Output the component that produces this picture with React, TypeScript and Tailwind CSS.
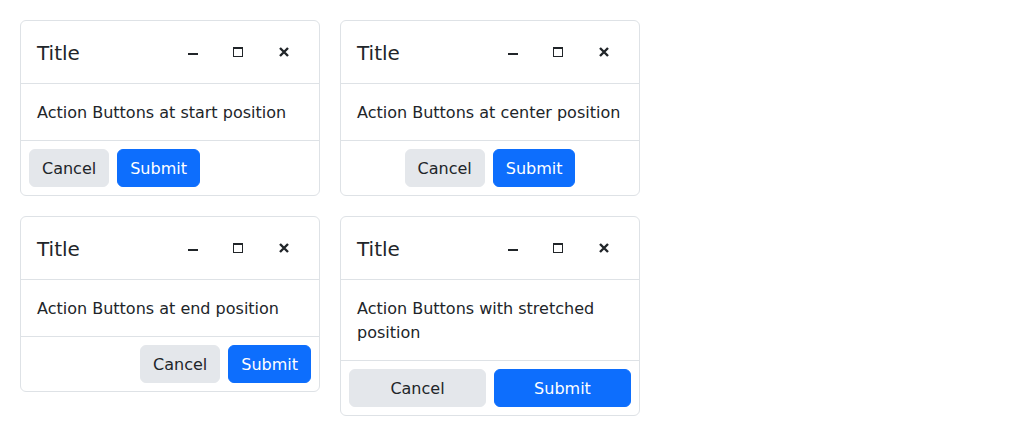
import React from "react";

type Align = "start" | "center" | "end" | "stretched";

const dialogs: { text: string; align: Align }[] = [
  { text: "Action Buttons at start position", align: "start" },
  { text: "Action Buttons at center position", align: "center" },
  { text: "Action Buttons at end position", align: "end" },
  { text: "Action Buttons with stretched position", align: "stretched" },
];

const MinIcon = () => (
  <svg width="16" height="16" viewBox="0 0 16 16" fill="currentColor" shapeRendering="crispEdges">
    <rect x="4" y="9" width="10" height="2" />
  </svg>
);

const MaxIcon = () => (
  <svg width="16" height="16" viewBox="0 0 16 16" fill="currentColor" shapeRendering="crispEdges">
    <path fillRule="evenodd" d="M3 3h10v10H3z M4 5h8v7H4z" />
  </svg>
);

const CloseIcon = () => (
  <svg width="16" height="16" viewBox="0 0 16 16" fill="none" stroke="currentColor" strokeWidth="2.4">
    <path d="M4 4L12 12M12 4L4 12" />
  </svg>
);

const Dialog = ({ text, align }: { text: string; align: Align }) => {
  const footer =
    align === "start"
      ? "justify-start"
      : align === "center"
      ? "justify-center"
      : align === "end"
      ? "justify-end"
      : "";
  const btn = align === "stretched" ? "flex-1" : "";
  return (
    <div className="w-[300px] border border-[#dee2e6] rounded-[6px] bg-white">
      {/* Header */}
      <div className="flex items-center justify-between px-4 py-3 border-b border-[#dee2e6]">
        <span className="text-[20px] leading-[24px] pt-[1px]">Title</span>
        <div className="flex gap-2">
          <button className="w-[38px] h-[38px] flex items-center justify-center">
            <MinIcon />
          </button>
          <button className="w-[38px] h-[38px] flex items-center justify-center">
            <MaxIcon />
          </button>
          <button className="w-[38px] h-[38px] flex items-center justify-center">
            <CloseIcon />
          </button>
        </div>
      </div>
      {/* Content */}
      <div className="px-4 pt-[17px] pb-[15px] text-base leading-6">{text}</div>
      {/* Actions */}
      <div className={`flex gap-2 p-2 border-t border-[#dee2e6] ${footer}`}>
        <button
          className={`${btn} h-[38px] px-3 pt-[1px] rounded-[6px] bg-[#e4e7eb] border border-[#e4e7eb] text-base leading-6`}
        >
          Cancel
        </button>
        <button
          className={`${btn} h-[38px] px-3 pt-[1px] rounded-[6px] bg-[#0d6efd] border border-[#0d6efd] text-white text-base leading-6`}
        >
          Submit
        </button>
      </div>
    </div>
  );
};

export default function App() {
  return (
    <div
      className="min-h-[436px] bg-white text-[#212529] p-5"
      style={{ fontFamily: '"DejaVu Sans", sans-serif' }}
    >
      <div className="grid grid-cols-[300px_300px] gap-5 items-start">
        {dialogs.map((d) => (
          <Dialog key={d.align} text={d.text} align={d.align} />
        ))}
      </div>
    </div>
  );
}
